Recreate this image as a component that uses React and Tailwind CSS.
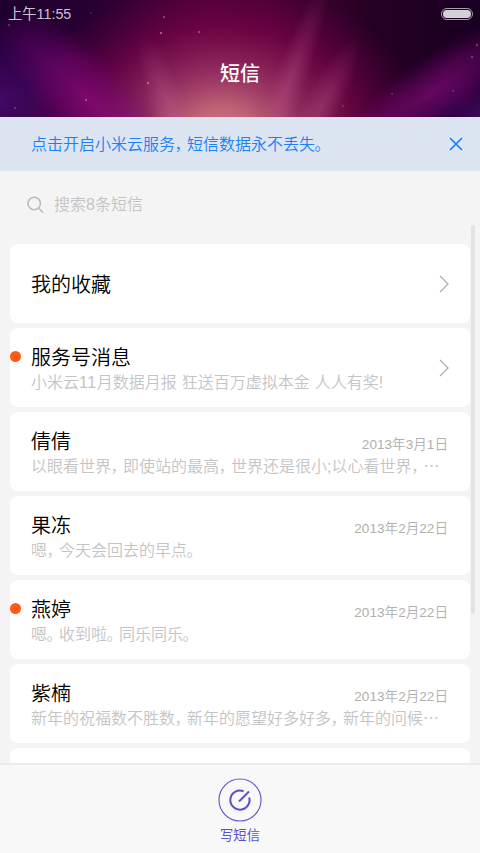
const threads = [
  { name: "我的收藏", arrow: true },
  { name: "服务号消息", preview: "小米云11月数据月报 狂送百万虚拟本金 人人有奖!", arrow: true, unread: true },
  { name: "倩倩", preview: "以眼看世界，即使站的最高，世界还是很小;以心看世界，…", date: "2013年3月1日" },
  { name: "果冻", preview: "嗯，今天会回去的早点。", date: "2013年2月22日" },
  { name: "燕婷", preview: "嗯。收到啦。同乐同乐。", date: "2013年2月22日", unread: true },
  { name: "紫楠", preview: "新年的祝福数不胜数，新年的愿望好多好多，新年的问候…", date: "2013年2月22日" },
];

const stars = [
  [9, 25, 0.3], [91, 13, 0.15], [164, 17, 0.4], [161, 33, 0.55], [199, 32, 0.4], [148, 83, 0.5],
  [86, 100, 0.4], [15, 108, 0.25], [236, 82, 0.4], [477, 45, 0.35], [472, 57, 0.35], [453, 91, 0.2],
  [392, 94, 0.2], [343, 106, 0.2],
];

const spacing = {
  "，": "-ml-[0.5px] tracking-[-3.5px]",
  "。": "-ml-[0.5px] tracking-[-3.5px]",
  "…": "font-['Noto_Sans_CJK_SC',sans-serif] leading-none",
  "11": "tracking-[0.6px]",
};

// full-width punctuation is set tighter than the characters around it
function Text({ children }) {
  return children.split(/([，。…]|11)/).map((part, i) =>
    spacing[part] ? <span key={i} className={spacing[part]}>{part}</span> : part
  );
}

function Aurora() {
  return (
    <svg className="absolute inset-0" width="480" height="117" viewBox="0 0 480 117">
      <defs>
        <linearGradient id="base">
          <stop offset="0" stopColor="#1e002e" />
          <stop offset="0.2" stopColor="#280031" />
          <stop offset="0.42" stopColor="#4c0036" />
          <stop offset="0.56" stopColor="#480034" />
          <stop offset="0.78" stopColor="#250025" />
          <stop offset="1" stopColor="#190022" />
        </linearGradient>
        <radialGradient id="glow">
          <stop offset="0" stopColor="#d97a7e" />
          <stop offset="0.18" stopColor="#c9687b" stopOpacity="0.9" />
          <stop offset="0.4" stopColor="#a93a6c" stopOpacity="0.75" />
          <stop offset="0.68" stopColor="#87054f" stopOpacity="0.55" />
          <stop offset="1" stopColor="#700048" stopOpacity="0" />
        </radialGradient>
        <radialGradient id="blue">
          <stop offset="0" stopColor="#4a0a70" stopOpacity="0.85" />
          <stop offset="1" stopColor="#440066" stopOpacity="0" />
        </radialGradient>
        <radialGradient id="violet">
          <stop offset="0" stopColor="#8c0c80" stopOpacity="0.65" />
          <stop offset="0.5" stopColor="#80067a" stopOpacity="0.42" />
          <stop offset="1" stopColor="#700070" stopOpacity="0" />
        </radialGradient>
        <radialGradient id="pink">
          <stop offset="0" stopColor="#c8609a" stopOpacity="0.3" />
          <stop offset="1" stopColor="#c8609a" stopOpacity="0" />
        </radialGradient>
      </defs>
      <rect width="480" height="117" fill="url(#base)" />
      <ellipse cx="0" cy="100" rx="110" ry="85" fill="url(#blue)" />
      <ellipse cx="485" cy="118" rx="65" ry="50" fill="url(#blue)" />
      <ellipse cx="222" cy="132" rx="205" ry="155" fill="url(#glow)" />
      <ellipse rx="125" ry="44" transform="translate(90 100) rotate(45)" fill="url(#violet)" />
      <ellipse rx="120" ry="34" transform="translate(432 92) rotate(-35)" fill="url(#violet)" />
      <ellipse rx="75" ry="18" transform="translate(168 105) rotate(70)" fill="url(#pink)" />
      <ellipse rx="105" ry="16" transform="translate(290 80) rotate(-70)" fill="url(#pink)" />
      <ellipse rx="75" ry="18" transform="translate(322 105) rotate(-62)" fill="url(#pink)" />
      {stars.map(([x, y, o]) => (
        <ellipse key={`${x}-${y}`} cx={x} cy={y} rx="0.9" ry="1.3" fill="#f0d0d0" opacity={o} />
      ))}
    </svg>
  );
}

function Header() {
  return (
    <header className="relative h-[117px] shrink-0 overflow-hidden">
      <Aurora />
      <div className="relative flex h-[27px] items-center justify-between pl-2 pr-[7px]">
        <span className="pt-px text-[14.3px] font-normal leading-none text-[#cdc3d0]">上午11:55</span>
        <span className="flex h-3 w-8 rounded-full border border-[#a79dab] p-px">
          <span className="flex-1 rounded-full bg-[#d5cfd8]" />
        </span>
      </div>
      <h1 className="relative mt-8 text-center text-[20px] font-medium leading-[30px] text-white">短信</h1>
    </header>
  );
}

function Thread({ name, preview, date, arrow, unread }) {
  return (
    <li className="relative flex h-[79px] shrink-0 items-center rounded-lg bg-white px-[21px]">
      {unread && <span className="absolute left-0 top-[23px] size-[11px] rounded-full bg-[#ff5a14]" />}
      <div className={preview ? "min-w-0 flex-1 pt-1" : "min-w-0 flex-1 pt-0.5"}>
        <div className="flex h-[26px] items-center justify-between">
          <span className="text-[20px] leading-[26px] text-black">{name}</span>
          {date && <span className="mr-px pt-[5px] text-[13.6px] leading-[21px] text-[#b0b0b0]">{date}</span>}
        </div>
        {preview && (
          <p className="h-6 whitespace-nowrap text-[16px] leading-[24px] text-[#c4c4c4] [word-spacing:0.5px]">
            <Text>{preview}</Text>
          </p>
        )}
      </div>
      {arrow && (
        <svg className="shrink-0" width="10" height="18" viewBox="0 0 10 18" fill="none" stroke="#b0b0b0" strokeWidth="1.3">
          <path d="M1 1L9 9L1 17" />
        </svg>
      )}
    </li>
  );
}

export default function App() {
  return (
    <div
      lang="zh-CN"
      className="flex h-[853px] w-[480px] flex-col overflow-hidden bg-[#f4f4f4] font-['Liberation_Sans','Noto_Sans_CJK_SC',sans-serif] font-[350]"
    >
      <Header />

      <div className="flex h-[54px] shrink-0 items-center justify-between bg-[#dde4f1] pl-[31px] pr-[17px] text-[#1b80f5]">
        <p className="pt-0.5 text-[16px] leading-6">
          <Text>点击开启小米云服务，短信数据永不丢失。</Text>
        </p>
        <svg width="14" height="14" viewBox="0 0 14 14" fill="none" stroke="currentColor" strokeWidth="1.7">
          <path d="M1 1L13 13M13 1L1 13" />
        </svg>
      </div>

      <main className="relative flex min-h-0 flex-1 flex-col overflow-hidden">
        <div className="flex h-[73px] shrink-0 items-center gap-2.5 pb-1.5 pl-[27px] text-[#c4c4c4]">
          <svg width="17" height="18" viewBox="0 0 17 18" fill="none" stroke="#bdbdbd" strokeWidth="1.6">
            <circle cx="7.2" cy="7.5" r="6.2" />
            <path d="M11.6 12L16.2 16.8" />
          </svg>
          <span className="pt-px text-[16px] leading-6">搜索8条短信</span>
        </div>
        <ul className="flex flex-col gap-[5px] px-[10px]">
          {threads.map((t) => (
            <Thread key={t.name} {...t} />
          ))}
          <li className="h-[79px] shrink-0 rounded-lg bg-white" />
        </ul>
        <span className="absolute right-[5px] top-[54px] h-[389px] w-1 rounded-full bg-[#e3e3e3]" />
      </main>

      <footer className="flex h-[90px] shrink-0 flex-col items-center border-t-2 border-[#ececec] bg-[#f8f8f8] pt-[13px] text-[#5b4fd0]">
        <svg width="44" height="44" viewBox="0 0 44 44" fill="none" stroke="currentColor">
          <circle cx="22" cy="22" r="21" strokeWidth="1.1" />
          <path d="M25.6 13.2A9.6 9.6 0 1 0 31.2 19.5" strokeWidth="2" />
          <path d="M21 23.5L31 13.5" strokeWidth="2" />
        </svg>
        <span className="mt-1 text-[13.3px] font-normal leading-5">写短信</span>
      </footer>
    </div>
  );
}
